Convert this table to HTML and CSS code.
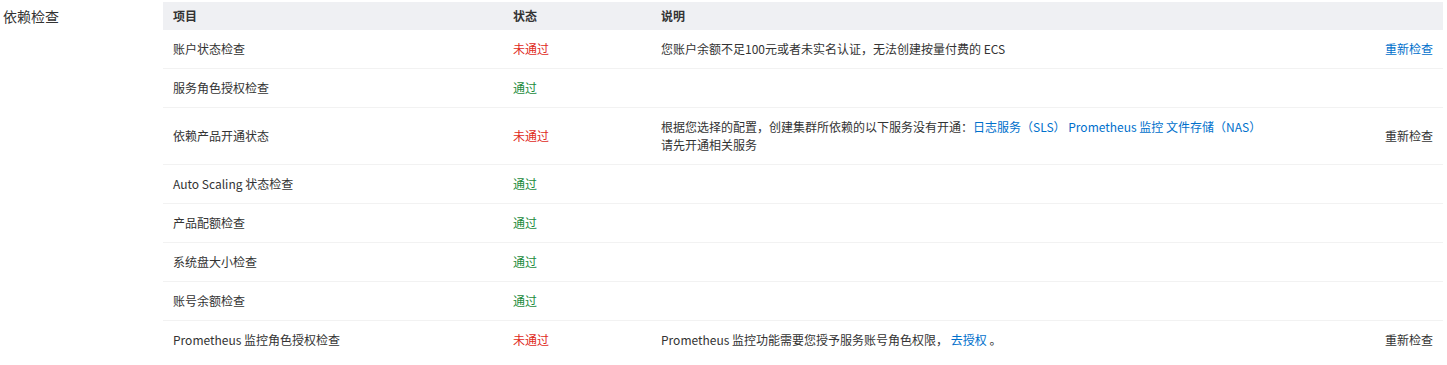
FILE: index.html
```html
<!DOCTYPE html>
<html lang="zh-CN">
<head>
<meta charset="utf-8">
<link rel="stylesheet" href="styles.css">
</head>
<body>
<div class="section">
  <div class="label">依赖检查</div>
  <table class="checks">
    <colgroup>
      <col class="c-item"><col class="c-status"><col class="c-desc"><col class="c-act">
    </colgroup>
    <thead>
      <tr><th>项目</th><th>状态</th><th>说明</th><th></th></tr>
    </thead>
    <tbody>
      <tr>
        <td>账户状态检查</td>
        <td class="fail">未通过</td>
        <td>您账户余额不足100元或者未实名认证，无法创建按量付费的 ECS</td>
        <td class="act"><a class="link">重新检查</a></td>
      </tr>
      <tr>
        <td>服务角色授权检查</td>
        <td class="pass">通过</td>
        <td></td>
        <td></td>
      </tr>
      <tr>
        <td>依赖产品开通状态</td>
        <td class="fail">未通过</td>
        <td>根据您选择的配置，创建集群所依赖的以下服务没有开通：<a class="link">日志服务（SLS）</a> <a class="link">Prometheus 监控</a> <a class="link">文件存储（NAS）</a><br>请先开通相关服务</td>
        <td class="act"><span class="plain">重新检查</span></td>
      </tr>
      <tr>
        <td>Auto Scaling 状态检查</td>
        <td class="pass">通过</td>
        <td></td>
        <td></td>
      </tr>
      <tr>
        <td>产品配额检查</td>
        <td class="pass">通过</td>
        <td></td>
        <td></td>
      </tr>
      <tr>
        <td>系统盘大小检查</td>
        <td class="pass">通过</td>
        <td></td>
        <td></td>
      </tr>
      <tr>
        <td>账号余额检查</td>
        <td class="pass">通过</td>
        <td></td>
        <td></td>
      </tr>
      <tr class="last">
        <td>Prometheus 监控角色授权检查</td>
        <td class="fail">未通过</td>
        <td>Prometheus 监控功能需要您授予服务账号角色权限， <a class="link">去授权</a> 。</td>
        <td class="act"><span class="plain">重新检查</span></td>
      </tr>
    </tbody>
  </table>
</div>
</body>
</html>
```

FILE: styles.css
```css
html, body {
  margin: 0;
  padding: 0;
  background: #fff;
}
body {
  font-family: "Noto Sans CJK SC", "Noto Sans", sans-serif;
  font-size: 12px;
  color: #333;
}
.section {
  display: flex;
  align-items: flex-start;
  padding: 2px 4px 0 0;
}
.label {
  width: 160px;
  flex: none;
  padding-left: 3px;
  font-size: 14px;
  line-height: 28px;
  color: #333;
}
.checks {
  flex: 1;
  border-collapse: collapse;
  table-layout: fixed;
  width: 1280px;
}
.c-item { width: 340px; }
.c-status { width: 148px; }
.c-act { width: 100px; }
.checks th {
  background: #eff0f3;
  font-weight: bold;
  text-align: left;
  padding: 0 10px;
  height: 28px;
  line-height: 18px;
  color: #333;
}
.checks td {
  padding: 10px;
  line-height: 18px;
  border-bottom: 1px solid #f2f2f2;
  vertical-align: middle;
}
.checks tr.last td {
  border-bottom: none;
}
.checks td.act {
  text-align: right;
}
.fail { color: #e02a1c; }
.pass { color: #1a8a3c; }
.link {
  color: #0070cc;
  cursor: pointer;
}
.plain {
  color: #333;
}
```
